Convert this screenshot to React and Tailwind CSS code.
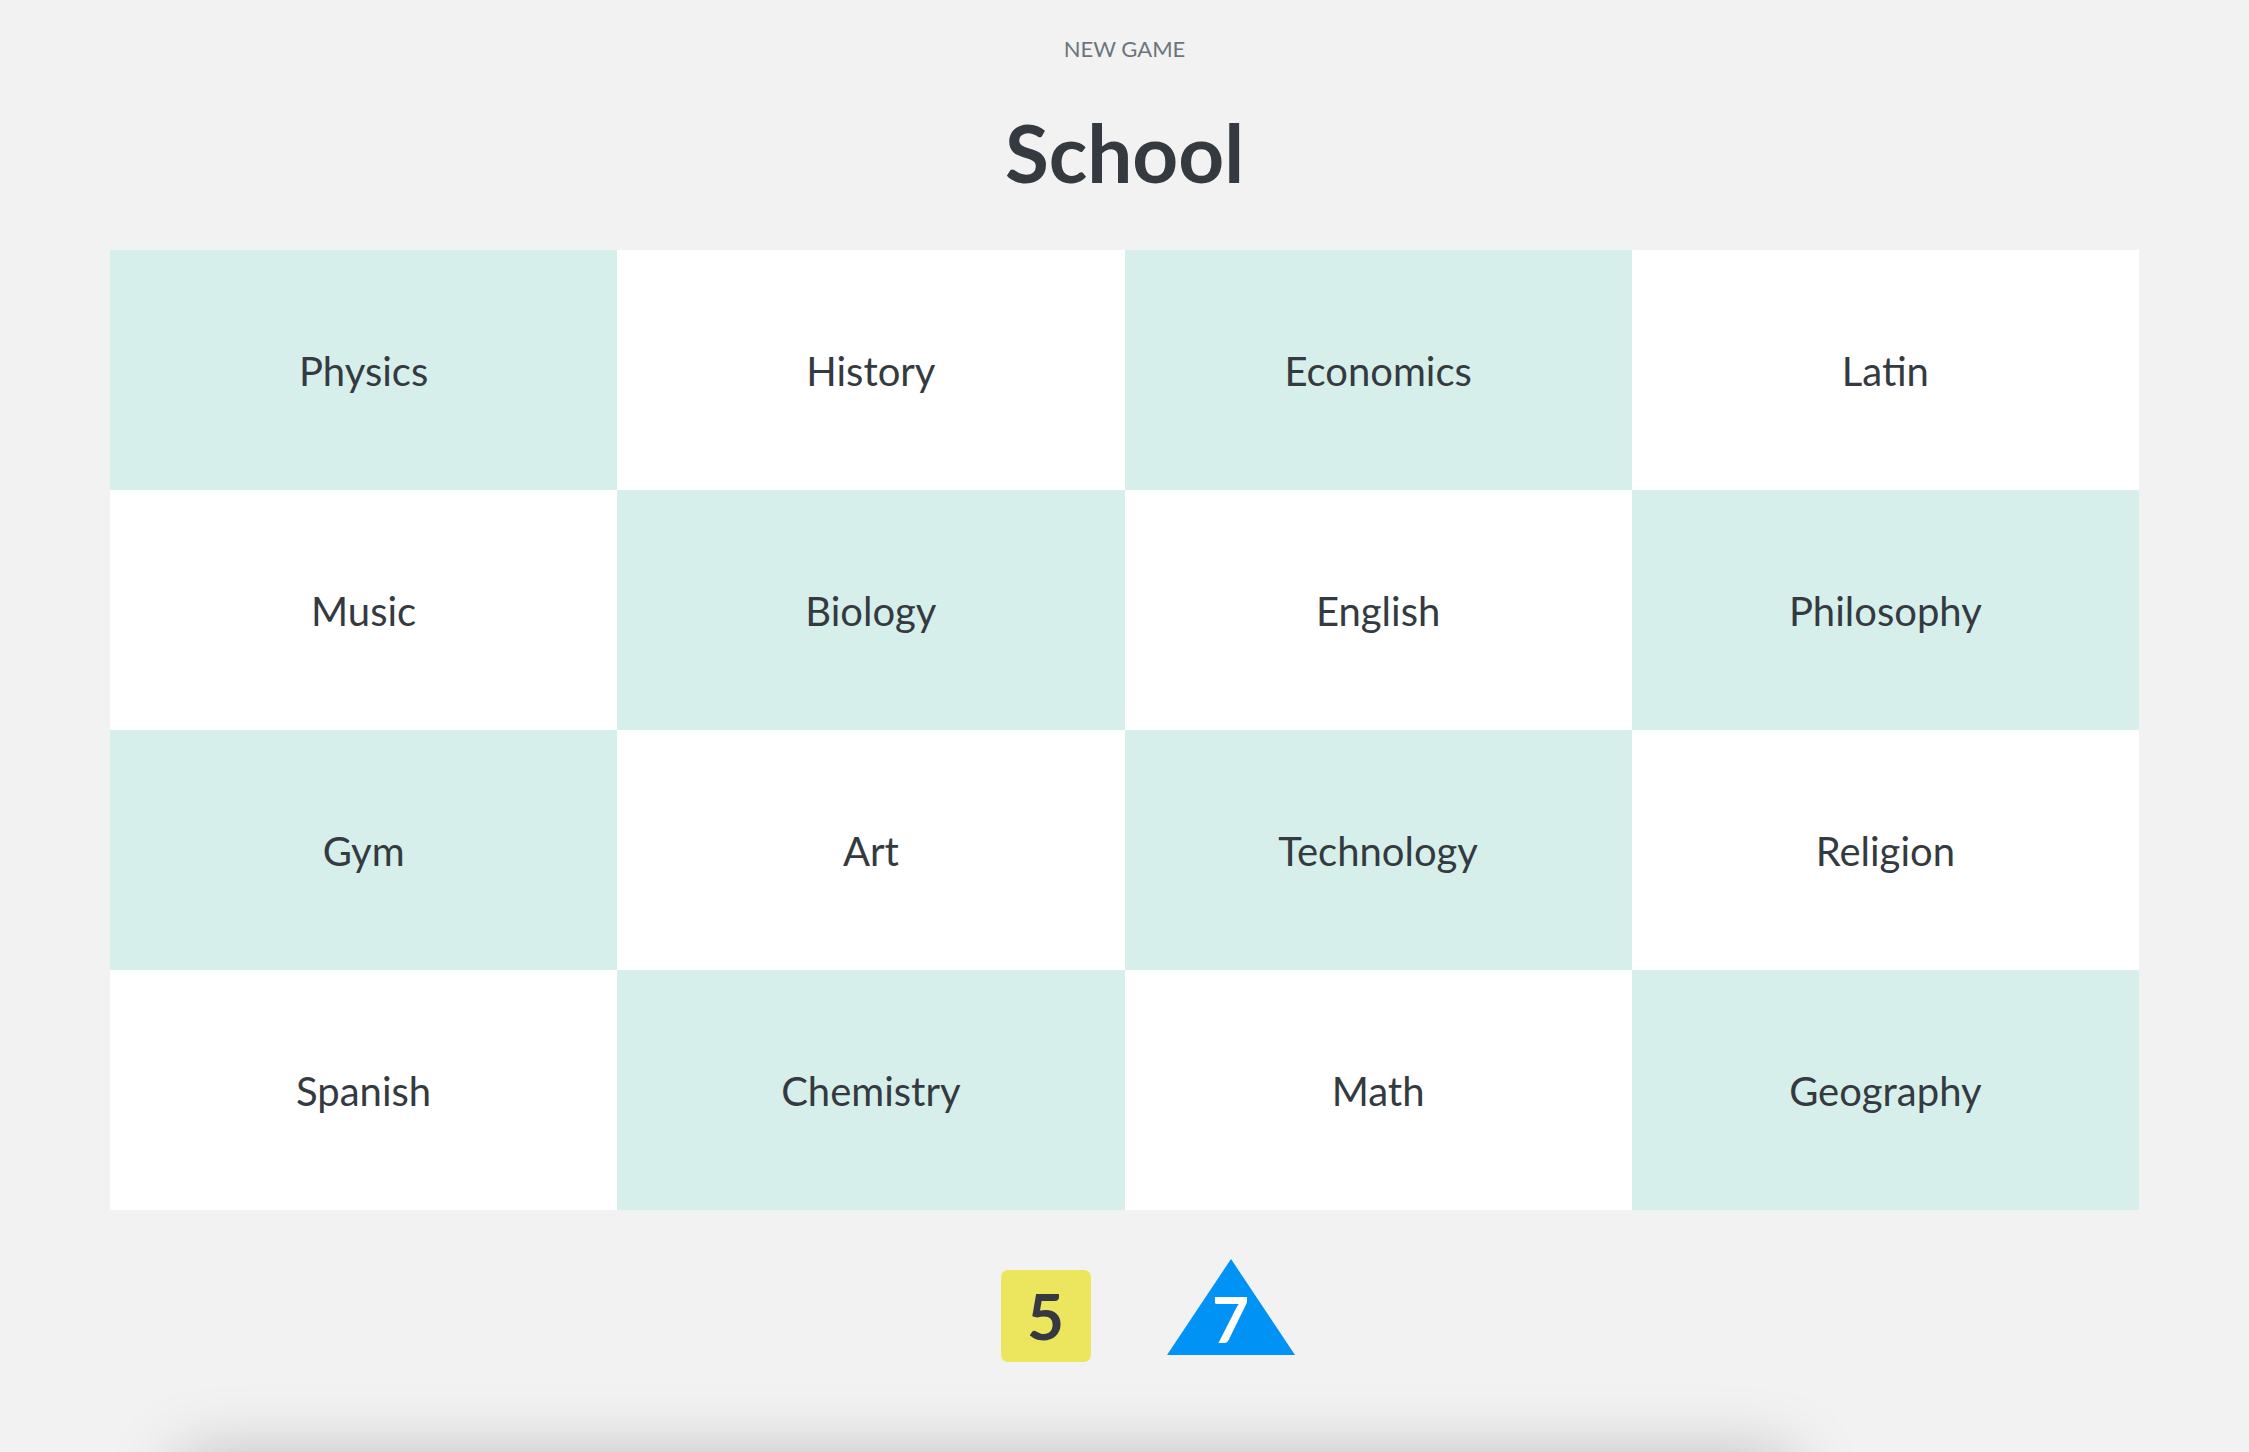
const subjects = [
  "Physics", "History", "Economics", "Latin",
  "Music", "Biology", "English", "Philosophy",
  "Gym", "Art", "Technology", "Religion",
  "Spanish", "Chemistry", "Math", "Geography",
];

const App = () => {
  return (
    <div className="min-h-screen bg-[#f2f2f2] font-['Lato','Open_Sans',sans-serif] text-[#343a40] overflow-hidden">
      <div className="pt-[34px] text-center text-[22px] leading-[30px] uppercase text-[#6c757d]">
        New Game
      </div>
      <h1 className="mt-[48px] text-center text-[80px] leading-[80px] font-bold">School</h1>

      <div className="mx-[110px] mt-[58px] grid grid-cols-4">
        {subjects.map((s, i) => {
          const row = Math.floor(i / 4);
          const teal = (i + row) % 2 === 0;
          return (
            <div
              key={s}
              className={
                "h-[240px] pt-[2px] flex items-center justify-center text-[40px] " +
                (teal ? "bg-[#d7efeb]" : "bg-white")
              }
            >
              {s}
            </div>
          );
        })}
      </div>

      <div className="mt-[49px] pl-[46px] flex justify-center items-start gap-[76px]">
        <div className="mt-[11px] w-[90px] h-[92px] rounded-[7px] bg-[#ebe65e] flex items-center justify-center text-[64px] font-bold">
          5
        </div>
        <div className="relative w-[128px] h-[96px]">
          <svg width="128" height="96" viewBox="0 0 128 96" className="block">
            <polygon points="64,0 128,96 0,96" fill="#0093f5" />
          </svg>
          <span className="absolute inset-x-0 top-[20px] text-center text-[64px] leading-[80px] font-bold text-white">
            7
          </span>
        </div>
      </div>

      <div className="ml-[180px] w-[1610px] h-[200px] mt-[98px] bg-[#f2f2f2] shadow-[0_0_70px_rgba(0,0,0,0.26)]" />
    </div>
  );
};

export default App;
